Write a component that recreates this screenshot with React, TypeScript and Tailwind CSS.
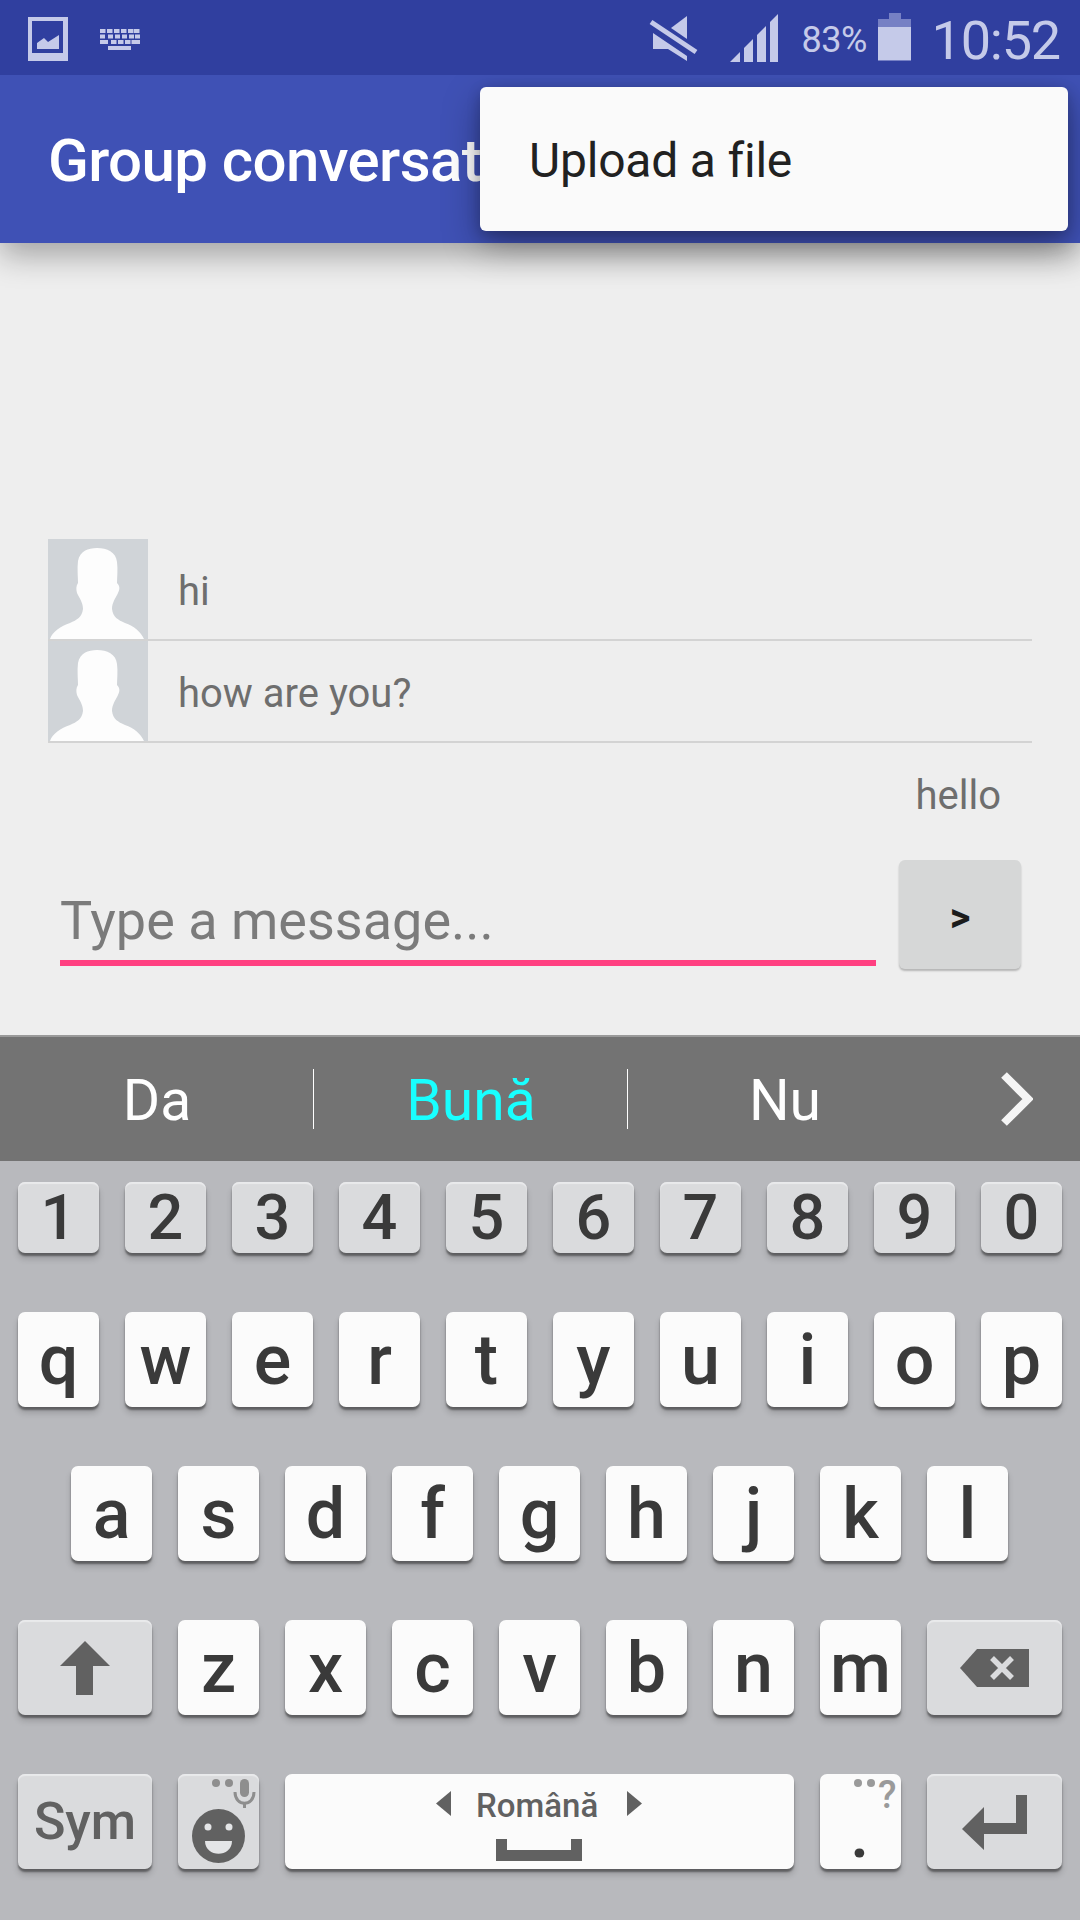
import React from "react";

const base = "flex items-center justify-center rounded-[7px] relative shrink-0 text-[#3a3a3a] font-medium leading-none";
const letterShadow = "shadow-[0_3px_2px_rgba(0,0,0,0.4),0_6px_6px_rgba(0,0,0,0.16)]";
const grayShadow = "shadow-[0_3px_2px_rgba(0,0,0,0.4),0_6px_6px_rgba(0,0,0,0.16),inset_0_2px_1px_#e9eaec]";

function Letter({ c }: { c: string }) {
  return <div className={`${base} ${letterShadow} w-[81px] h-[95px] bg-[#fbfbfb] text-[70px]`}>{c}</div>;
}
function Digit({ c }: { c: string }) {
  return <div className={`${base} ${grayShadow} w-[81px] h-[71px] bg-[#dadbdd] text-[63px]`}>{c}</div>;
}
function WideLeft({ children }: { children: React.ReactNode }) {
  return <div className={`${base} ${grayShadow} w-[134px] h-[95px] bg-[#dadbdd]`}>{children}</div>;
}
function WideRight({ children }: { children: React.ReactNode }) {
  return <div className={`${base} ${grayShadow} w-[135px] h-[95px] bg-[#dadbdd]`}>{children}</div>;
}

function Avatar() {
  return (
    <div className="w-[100px] h-[100px] bg-[#d0d4d8] shrink-0">
      <svg width="100" height="100" viewBox="0 0 100 100">
        <path
          d="M2 100C4 93 13 87 22 84C29 81 34 78 35 70C35 64 32 60 29 54C28 50 28 47 30 44C30 38 29 30 30 22C32 12 40 9 49 9C59 9 68 13 69 23C70 30 69 38 69 44C72 47 72 50 70 54C67 60 64 64 64 70C65 78 70 81 77 84C86 87 93 93 96 100Z"
          fill="#fdfdfd"
        />
      </svg>
    </div>
  );
}

function Message({ text }: { text: string }) {
  return (
    <div className="flex h-[102px] border-b-2 border-[#d3d3d3]">
      <Avatar />
      <div className="pl-[30px] pt-[6px] flex items-center text-[40px] leading-[48px] text-[#6e6e6e]">{text}</div>
    </div>
  );
}

function Suggestion({ text, color, line }: { text: string; color: string; line: boolean }) {
  return (
    <div className="w-[314px] h-[60px] flex items-center justify-center relative shrink-0">
      <span className={`text-[57px] leading-[60px] pt-[4px] ${color}`}>{text}</span>
      {line && <div className="absolute right-0 top-0 w-px h-[60px] bg-white" />}
    </div>
  );
}

export default function App() {
  return (
    <div className="w-[1080px] h-[1920px] flex flex-col overflow-hidden bg-[#eeeeee] font-[Roboto,sans-serif]">
      {/* Status bar */}
      <div className="h-[75px] shrink-0 bg-[#303f9f] flex items-start relative z-20 text-[#c5cae9]">
        <svg className="ml-[28px] mt-[17px]" width="40" height="44" viewBox="0 0 40 44">
          <path fillRule="evenodd" d="M0 0H40V44H0ZM4 4V36H35V4Z" fill="#c5cae9" />
          <path d="M9 32V26L16 21L20 25L31 18V32Z" fill="#c5cae9" />
        </svg>
        <svg className="ml-[32px] mt-[29px]" width="40" height="21" viewBox="0 0 40 21" fill="#c5cae9">
          {[0, 7, 14, 21, 28, 34].map((x) => (
            <rect key={x} x={x} y="0" width="5.5" height="4" />
          ))}
          {[0, 8, 15, 22, 29, 35].map((x) => (
            <rect key={x} x={x} y="5.5" width="5" height="4" />
          ))}
          <rect x="0" y="11" width="8" height="4" />
          <rect x="11" y="11" width="5.5" height="4" />
          <rect x="18" y="11" width="5.5" height="4" />
          <rect x="25" y="11" width="5.5" height="4" />
          <rect x="31.5" y="11" width="8.5" height="4" />
          <rect x="8" y="17" width="23" height="4" />
        </svg>
        <div className="ml-auto flex items-start pr-[20px]">
          <svg className="mt-[16px]" width="49" height="46" viewBox="0 0 49 46" fill="#c5cae9">
            <path d="M22 12L38 0V23Z" />
            <path d="M4 17V33H19L38 45V40Z" />
            <path d="M2 6L47 36" stroke="#c5cae9" strokeWidth="5" />
          </svg>
          <svg className="ml-[32px] mt-[14px]" width="48" height="48" viewBox="0 0 48 48" fill="#c5cae9">
            <path d="M0 48L10 38V48Z" />
            <path d="M14 34L23 25V48H14Z" />
            <path d="M27 21L36 12V48H27Z" />
            <path d="M40 8L48 0V48H40Z" />
          </svg>
          <span className="ml-[24px] w-[67px] mt-[22px] text-[36px] leading-[36px] tracking-[-0.5px]">83%</span>
          <svg className="ml-[9px] mt-[13px]" width="33" height="48" viewBox="0 0 33 48">
            <path d="M11 0H23V6H33V14H0V6H11Z" fill="#7680c4" />
            <path d="M0 14H33V47H0Z" fill="#c5cae9" />
            <path d="M0 47H33V48H0Z" fill="#7680c4" />
          </svg>
          <span className="ml-[21px] mt-[14px] text-[54px] leading-[54px] tracking-[-1.2px]">10:52</span>
        </div>
      </div>

      {/* App bar */}
      <div className="h-[168px] shrink-0 bg-[#3f51b5] relative z-10 shadow-[0_12px_30px_rgba(0,0,0,0.32)]">
        <div className="ml-[48px] mt-[44px] w-[432px] h-[84px] overflow-hidden text-[60px] leading-[84px] font-medium text-white tracking-[-0.6px] whitespace-nowrap">
          Group conversat
        </div>
        <div className="absolute left-[480px] top-[12px] w-[588px] h-[144px] bg-[#fafafa] rounded-[6px] shadow-[0_14px_36px_rgba(0,0,0,0.34),0_4px_14px_rgba(0,0,0,0.2)] flex items-center pl-[49px] pt-[4px] text-[48px] text-[#212121] tracking-[-0.2px]">
          Upload a file
        </div>
      </div>

      {/* Chat */}
      <div className="h-[792px] shrink-0 pt-[296px] px-[48px] bg-[#eeeeee]">
        <Message text="hi" />
        <Message text="how are you?" />
        <div className="mt-[29px] pr-[31px] text-right text-[40px] leading-[48px] text-[#6e6e6e]">hello</div>
        <div className="mt-[40px] flex items-start pl-[12px] pr-[11px]">
          <div className="w-[816px] pt-[34px] pb-[12px] leading-[54px] text-[54px] text-[#7b7b7b] border-b-[6px] border-[#ff4081]">
            Type a message...
          </div>
          <div className="ml-[23px] w-[122px] h-[109px] bg-[#d6d7d7] rounded-[6px] shadow-[0_2px_2px_rgba(0,0,0,0.24)] flex items-center justify-center pt-[6px] text-[#1c1c1c] text-[40px] font-bold leading-none">
            &gt;
          </div>
        </div>
      </div>

      {/* Suggestions */}
      <div className="h-[126px] shrink-0 bg-[#737373] border-t-2 border-[#9a9a9a] flex items-center relative">
        <Suggestion text="Da" color="text-white" line />
        <Suggestion text="Bună" color="text-[#18ffff]" line />
        <Suggestion text="Nu" color="text-white" line={false} />
        <svg className="ml-[58px]" width="33" height="56" viewBox="0 0 33 56" fill="none">
          <path d="M4 4L28 28L4 52" stroke="#f5f5f5" strokeWidth="8" />
        </svg>
      </div>

      {/* Keyboard */}
      <div className="flex-1 bg-[#b8b9bd] pt-[21px] px-[18px] flex flex-col gap-[59px]">
        <div className="flex gap-[26px]">
          {"1234567890".split("").map((c) => (
            <Digit key={c} c={c} />
          ))}
        </div>
        <div className="flex gap-[26px]">
          {"qwertyuiop".split("").map((c) => (
            <Letter key={c} c={c} />
          ))}
        </div>
        <div className="flex gap-[26px] pl-[53px]">
          {"asdfghjkl".split("").map((c) => (
            <Letter key={c} c={c} />
          ))}
        </div>
        <div className="flex gap-[26px]">
          <WideLeft>
            <svg width="50" height="54" viewBox="0 0 50 54" fill="#616161">
              <path d="M25 0L50 25H33V54H16V25H0Z" />
            </svg>
          </WideLeft>
          {"zxcvbnm".split("").map((c) => (
            <Letter key={c} c={c} />
          ))}
          <WideRight>
            <svg className="mt-[1px]" width="69" height="38" viewBox="0 0 69 38">
              <path d="M17 0H69V38H17L0 19Z" fill="#616161" />
              <path d="M32 9L52 29M52 9L32 29" stroke="#dadbdd" strokeWidth="5.5" />
            </svg>
          </WideRight>
        </div>
        <div className="flex gap-[26px]">
          <WideLeft>
            <span className="text-[52px] text-[#616161] mt-[1px]">Sym</span>
          </WideLeft>
          <div className={`${base} ${grayShadow} w-[81px] h-[95px] bg-[#dadbdd]`}>
            <svg className="absolute left-0 top-0" width="81" height="95" viewBox="0 0 81 95">
              <circle cx="38" cy="9" r="4" fill="#8e8e8e" />
              <circle cx="51" cy="9" r="4" fill="#8e8e8e" />
              <rect x="62" y="5" width="9" height="18" rx="4.5" fill="#8e8e8e" />
              <path d="M57 18C57 33 76 33 76 18" stroke="#8e8e8e" strokeWidth="3" fill="none" />
              <path d="M66.5 29V34" stroke="#8e8e8e" strokeWidth="3" />
              <ellipse cx="40.5" cy="62" rx="26.5" ry="27" fill="#616161" />
              <circle cx="30" cy="53" r="3.5" fill="#e4e5e7" />
              <circle cx="51" cy="53" r="3.5" fill="#e4e5e7" />
              <path d="M27 67H54C54 84 27 84 27 67Z" fill="#e4e5e7" />
            </svg>
          </div>
          <div className={`${base} ${letterShadow} w-[509px] h-[95px] bg-[#fbfbfb]`}>
            <svg className="absolute left-[151px] top-[17px]" width="15" height="25" viewBox="0 0 15 25" fill="#616161">
              <path d="M15 0V25L0 12.5Z" />
            </svg>
            <span className="absolute left-[191px] top-[15px] text-[33px] leading-[33px] text-[#616161]">Română</span>
            <svg className="absolute left-[342px] top-[17px]" width="15" height="25" viewBox="0 0 15 25" fill="#616161">
              <path d="M0 0V25L15 12.5Z" />
            </svg>
            <svg className="absolute left-[211px] top-[65px]" width="86" height="22" viewBox="0 0 86 22" fill="#616161">
              <path d="M0 0H11V11H75V0H86V22H0Z" />
            </svg>
          </div>
          <div className={`${base} ${letterShadow} w-[81px] h-[95px] bg-[#fbfbfb]`}>
            <svg className="absolute left-0 top-0" width="81" height="20" viewBox="0 0 81 20" fill="#9a9a9a">
              <circle cx="38" cy="9" r="4" />
              <circle cx="51" cy="9" r="4" />
            </svg>
            <span className="absolute left-[58px] top-[2px] text-[38px] leading-[38px] text-[#9a9a9a]">?</span>
            <span className="absolute left-[30px] top-[38px] text-[70px] leading-[42px] text-[#3a3a3a]">.</span>
          </div>
          <WideRight>
            <svg className="mt-[1px]" width="65" height="55" viewBox="0 0 65 55" fill="#616161">
              <path d="M54 0H65V39H22V55L0 34L22 12V28H54Z" />
            </svg>
          </WideRight>
        </div>
      </div>
    </div>
  );
}
